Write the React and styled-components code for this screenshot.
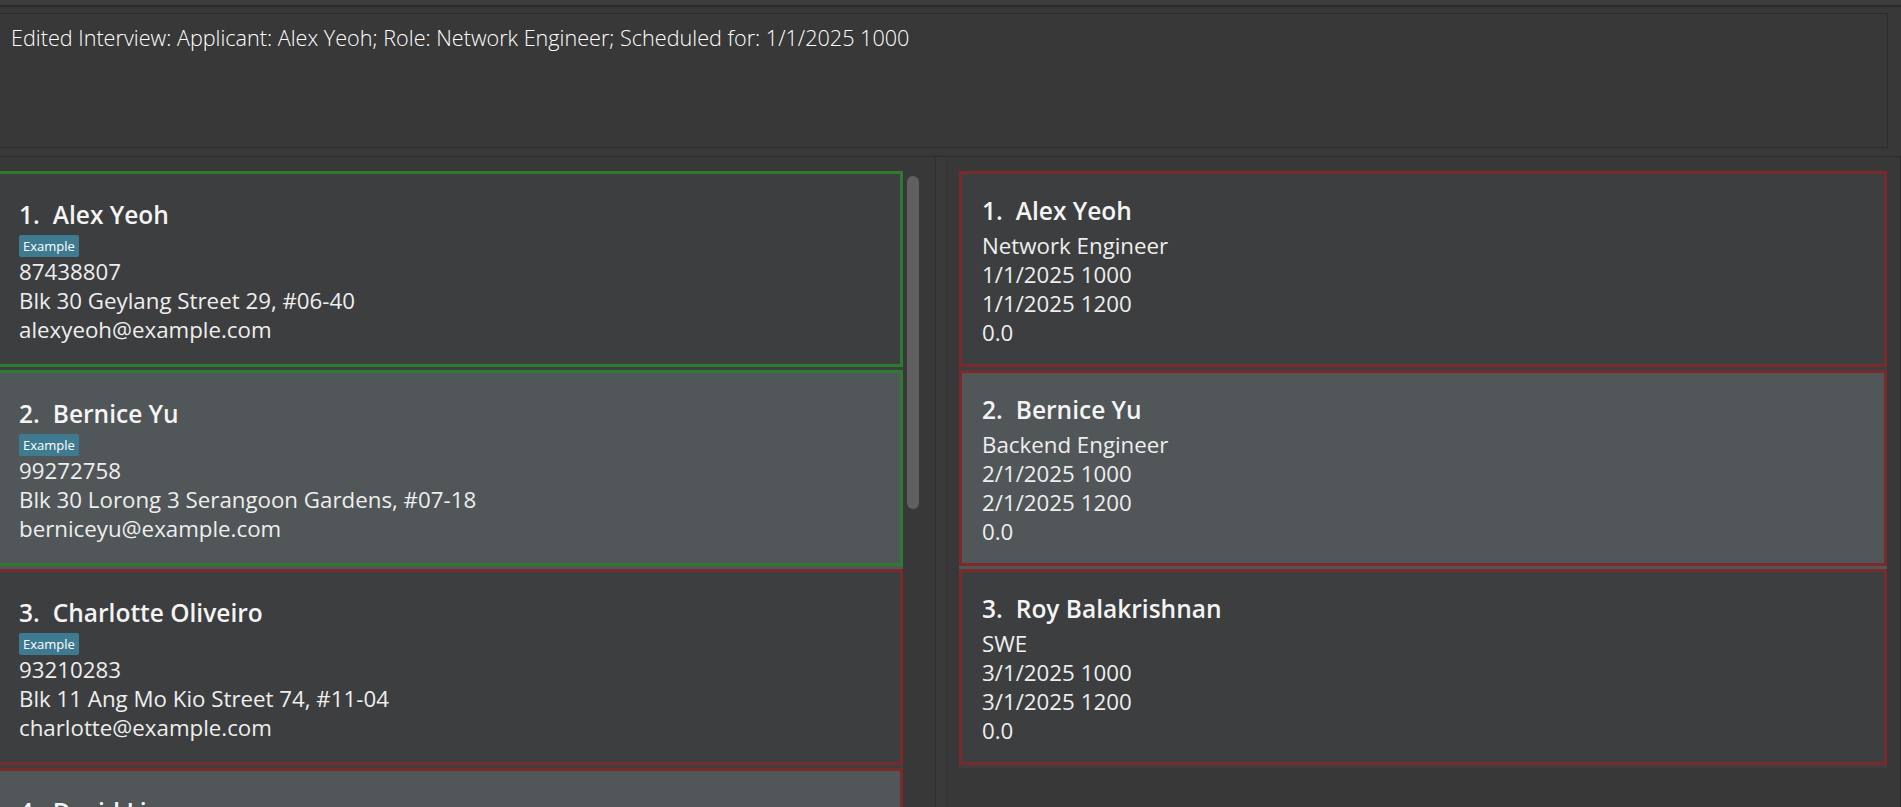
import styled, { createGlobalStyle } from "styled-components";

const applicants = [
    { name: "Alex Yeoh", phone: "87438807", address: "Blk 30 Geylang Street 29, #06-40", email: "alexyeoh@example.com", tone: "green" },
    { name: "Bernice Yu", phone: "99272758", address: "Blk 30 Lorong 3 Serangoon Gardens, #07-18", email: "berniceyu@example.com", tone: "green" },
    { name: "Charlotte Oliveiro", phone: "93210283", address: "Blk 11 Ang Mo Kio Street 74, #11-04", email: "charlotte@example.com", tone: "red" },
    { name: "David Li", phone: "91031282", address: "Blk 436 Serangoon Gardens Street 26, #16-43", email: "lidavid@example.com", tone: "red" },
]

const interviews = [
    { name: "Alex Yeoh", role: "Network Engineer", start: "1/1/2025 1000", end: "1/1/2025 1200", score: "0.0" },
    { name: "Bernice Yu", role: "Backend Engineer", start: "2/1/2025 1000", end: "2/1/2025 1200", score: "0.0" },
    { name: "Roy Balakrishnan", role: "SWE", start: "3/1/2025 1000", end: "3/1/2025 1200", score: "0.0" },
]

export default function App() {
    return (
        <Shell>
            <GlobalStyle />
            <MenuStrip />
            <ResultWrap>
                <ResultBox>
                    Edited Interview: Applicant: Alex Yeoh; Role: Network Engineer; Scheduled for: 1/1/2025 1000
                </ResultBox>
            </ResultWrap>
            <Split>
                <LeftPane>
                    <List>
                        {applicants.map((p, i) => (
                            <Cell key={p.name} $light={i % 2 === 1}>
                                <Card $light={i % 2 === 1} $tone={p.tone}>
                                    <Name><Index>{i + 1}.</Index>{p.name}</Name>
                                    <Tags>
                                        <Tag>Example</Tag>
                                    </Tags>
                                    <Detail>{p.phone}</Detail>
                                    <Detail>{p.address}</Detail>
                                    <Detail>{p.email}</Detail>
                                </Card>
                            </Cell>
                        ))}
                    </List>
                    <ScrollTrack>
                        <Thumb />
                    </ScrollTrack>
                </LeftPane>
                <Divider />
                <RightPane>
                    {interviews.map((iv, i) => (
                        <Cell key={iv.name} $light={i % 2 === 1}>
                            <Card $light={i % 2 === 1} $tone="red" $compact>
                                <Name><Index>{i + 1}.</Index>{iv.name}</Name>
                                <Role>{iv.role}</Role>
                                <Detail>{iv.start}</Detail>
                                <Detail>{iv.end}</Detail>
                                <Detail>{iv.score}</Detail>
                            </Card>
                        </Cell>
                    ))}
                </RightPane>
            </Split>
        </Shell>
    )
}

const GlobalStyle = createGlobalStyle`
    body {
        margin: 0;
        background-color: #383838;
    }
`
const Shell = styled.div`
    width: 1901px;
    height: 807px;
    overflow: hidden;
    display: flex;
    flex-direction: column;
    background-color: #383838;
    font-family: "Open Sans", "Noto Sans", sans-serif;
    color: #f2f2f2;
`
const MenuStrip = styled.div`
    height: 5px;
    flex-shrink: 0;
    background-color: #3c3c3c;
    border-bottom: 2px solid #2a2a2a;
`
const ResultWrap = styled.div`
    flex-shrink: 0;
    padding: 6px 13px 0 0;
`
const ResultBox = styled.div`
    box-sizing: border-box;
    height: 135px;
    margin-left: -2px;
    border: 1px solid #2b2b2b;
    padding: 10px 12px;
    font-size: 21.6px;
    font-weight: 300;
    line-height: 28px;
    color: #ffffff;
    white-space: nowrap;
`
const Split = styled.div`
    flex: 1;
    display: flex;
    flex-direction: row;
    margin-top: 8px;
    border-top: 1px solid #2b2b2b;
    min-height: 0;
`
const LeftPane = styled.div`
    width: 935px;
    flex-shrink: 0;
    display: flex;
    flex-direction: row;
    overflow: hidden;
`
const List = styled.div`
    width: 907px;
    flex-shrink: 0;
    margin-left: -4px;
    padding-top: 14px;
`
const ScrollTrack = styled.div`
    flex: 1;
    padding: 19px 4px 0 4px;
`
const Thumb = styled.div`
    width: 12px;
    height: 333px;
    border-radius: 6px;
    background-color: #606060;
`
const Divider = styled.div`
    box-sizing: border-box;
    width: 12px;
    flex-shrink: 0;
    background-color: #3a3a3a;
    border-left: 1px solid #2e2e2e;
    border-right: 1px solid #333333;
`
const RightPane = styled.div`
    flex: 1;
    box-sizing: border-box;
    padding: 14px 13px 0 12px;
    border-right: 1px solid #2b2b2b;
`
const Cell = styled.div`
    padding-bottom: 3px;
    background-color: ${props => props.$light ? "#515658" : "#3c3e3f"};
`
const Card = styled.div`
    box-sizing: border-box;
    height: 196px;
    overflow: hidden;
    border: 3px solid ${props => props.$tone === "green" ? "#2e7a2e" : "#7a2a2b"};
    background-color: ${props => props.$light ? "#515658" : "#3c3e3f"};
    padding: ${props => props.$compact ? "21px 20px 0 20px" : "25px 20px 0 20px"};
    display: flex;
    flex-direction: column;
`
const Name = styled.div`
    font-size: 24.5px;
    font-weight: 600;
    line-height: 32px;
    color: #f4f4f4;
    white-space: nowrap;
`
const Index = styled.span`
    margin-right: 13px;
`
const Tags = styled.div`
    display: flex;
    gap: 6px;
    margin-top: 4px;
`
const Tag = styled.span`
    height: 22px;
    line-height: 22px;
    padding: 0 4px;
    border-radius: 2px;
    background-color: #3e7b91;
    color: #ffffff;
    font-size: 13px;
`
const Role = styled.div`
    margin-top: 4px;
    font-size: 22.3px;
    line-height: 29px;
    color: #eeeeee;
`
const Detail = styled.div`
    font-size: 22.3px;
    line-height: 29px;
    color: #eeeeee;
    white-space: nowrap;
`
